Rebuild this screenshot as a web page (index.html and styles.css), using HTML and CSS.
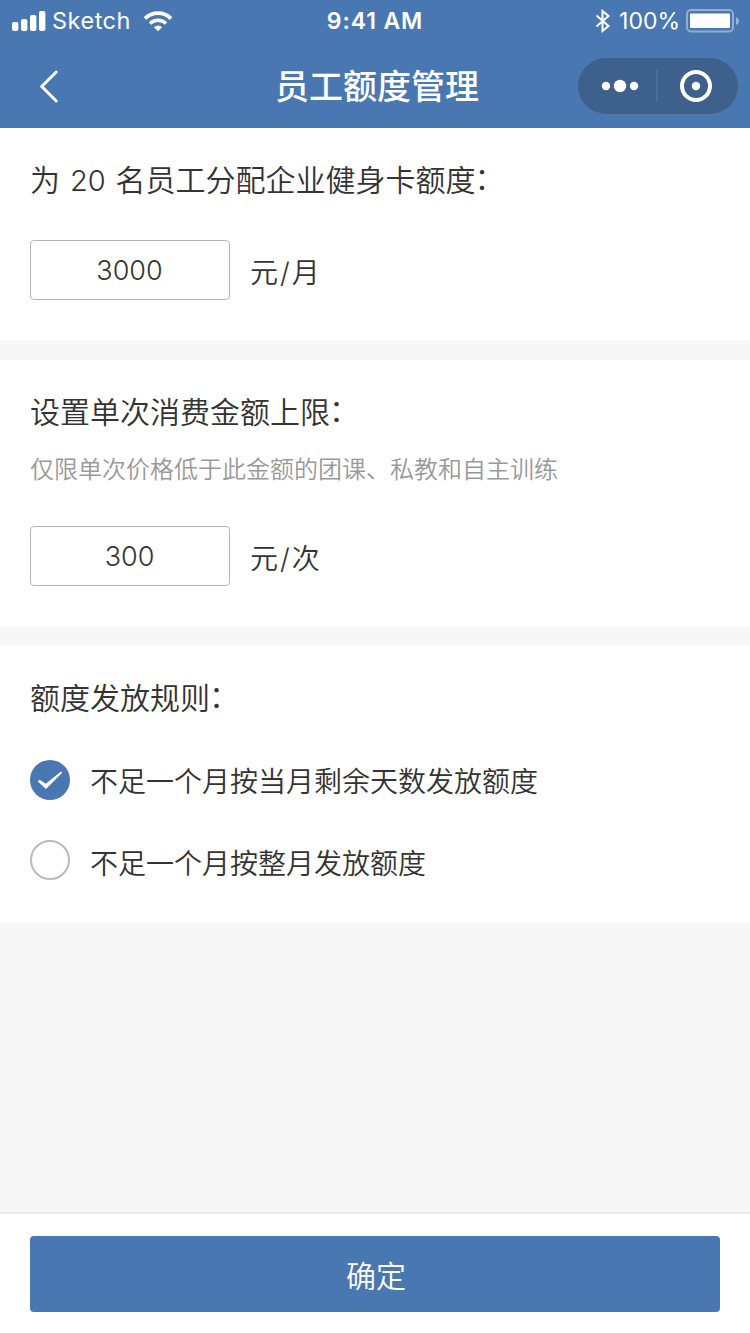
FILE: index.html
```
<!DOCTYPE html>
<html lang="zh-CN">
<head>
    <meta charset="UTF-8">
    <meta name="viewport" content="width=device-width, initial-scale=1.0">
    <title>员工额度管理</title>
    <link rel="stylesheet" href="styles.css">
</head>
<body>

    <header class="header">
        <div class="status-bar">
            <div class="status-left">
                <svg class="signal" width="34" height="20" viewBox="0 0 34 20" fill="#fff">
                    <rect x="0" y="11" width="6.4" height="9" rx="2"/>
                    <rect x="9" y="8" width="6.4" height="12" rx="2"/>
                    <rect x="18" y="4" width="6.4" height="16" rx="2"/>
                    <rect x="27" y="0" width="6.4" height="20" rx="2"/>
                </svg>
                <span class="carrier">Sketch</span>
                <svg class="wifi" width="30" height="21" viewBox="0 0 30 21" fill="none" stroke="#fff">
                    <path d="M2 7.6a18.4 18.4 0 0 1 26 0" stroke-width="3.8"/>
                    <path d="M7 12.6a11.4 11.4 0 0 1 16 0" stroke-width="3.4"/>
                    <path d="M15 20.3l-4-4.1a5.7 5.7 0 0 1 8 0z" fill="#fff" stroke="none"/>
                </svg>
            </div>
            <span class="time">9:41 AM</span>
            <div class="status-right">
                <svg width="16" height="24" viewBox="0 0 16 24" fill="none" stroke="#fff" stroke-width="2">
                    <path d="M1.500 6.500l12 10.500L7.500 22V2l6 5-12 10.500"/>
                </svg>
                <span class="percent">100%</span>
                <svg width="54" height="24" viewBox="0 0 54 24">
                    <rect x="1" y="1" width="46" height="21.5" rx="4" fill="none" stroke="#fff" stroke-opacity=".4" stroke-width="2"/>
                    <rect x="4" y="4.5" width="40" height="14.5" rx="1" fill="#fff"/>
                    <path d="M50 8c4 1.500 4 6.500 0 8z" fill="#fff" fill-opacity=".45"/>
                </svg>
            </div>
        </div>
        <nav class="nav-bar">
            <svg class="back" width="20" height="34" viewBox="0 0 20 34" fill="none" stroke="#fff" stroke-width="3" stroke-linecap="round" stroke-linejoin="round">
                <path d="M17.200 3L2.700 17.500 17.200 32"/>
            </svg>
            <h1 class="title">员工额度管理</h1>
            <div class="capsule">
                <svg width="38" height="14" viewBox="0 0 38 14" fill="#fff">
                    <circle cx="5" cy="7" r="4.200"/>
                    <circle cx="19" cy="7" r="6.200"/>
                    <circle cx="33" cy="7" r="4.200"/>
                </svg>
                <span class="capsule-line"></span>
                <svg width="34" height="34" viewBox="0 0 34 34">
                    <circle cx="17" cy="17" r="14" fill="none" stroke="#fff" stroke-width="4"/>
                    <circle cx="17" cy="17" r="4.200" fill="#fff"/>
                </svg>
            </div>
        </nav>
    </header>

    <form class="content">
        <section class="section">
            <h2>为 <span class="count">20</span> 名员工分配企业健身卡额度<span class="colon">：</span></h2>
            <div class="amount">
                <input type="text" name="quota" value="3000">
                <span>元<i>/</i>月</span>
            </div>
        </section>

        <section class="section">
            <h2>设置单次消费金额上限<span class="colon">：</span></h2>
            <p class="hint">仅限单次价格低于此金额的团课、私教和自主训练</p>
            <div class="amount">
                <input type="text" name="limit" value="300">
                <span>元<i>/</i>次</span>
            </div>
        </section>

        <section class="section rules">
            <h2>额度发放规则<span class="colon">：</span></h2>
            <div class="rule">
                <svg width="40" height="40" viewBox="0 0 40 40">
                    <circle cx="20" cy="20" r="20" fill="#4977b1"/>
                    <path d="M7.700 21.500l1.800-1.800 6.300 4L31 11.500l1.200 1.200L16 29z" fill="#fff"/>
                </svg>
                <span>不足一个月按当月剩余天数发放额度</span>
            </div>
            <div class="rule">
                <svg width="40" height="40" viewBox="0 0 40 40">
                    <circle cx="20" cy="20" r="19" fill="#fff" stroke="#bbb" stroke-width="2"/>
                </svg>
                <span>不足一个月按整月发放额度</span>
            </div>
        </section>
    </form>

    <footer class="footer">
        <button type="submit">确定</button>
    </footer>

</body>
</html>
```
FILE: styles.css
```
* {
    box-sizing: border-box;
}
body {
    margin: 0;
    height: 1333px;
    display: flex;
    flex-direction: column;
    background: #f7f7f7;
    color: #333;
    font-family: Inter, "Noto Sans CJK SC", sans-serif;
    font-weight: 350;
}
svg {
    display: block;
    flex: none;
}
h1, h2, p {
    margin: 0;
    font-weight: 350;
}

/* header */
.header {
    height: 128px;
    background: #4977b1;
    color: #fff;
}
.status-bar {
    height: 40px;
    padding: 0 10px 0 12px;
    display: grid;
    grid-template-columns: 1fr auto 1fr;
    align-items: center;
    font-size: 24px;
    font-weight: 400;
    line-height: 42px;
}
.status-left, .status-right {
    height: 40px;
    display: flex;
    align-items: center;
}
.carrier {
    margin: 0 12px 0 6px;
    font-size: 23.5px;
    letter-spacing: 0.5px;
}
.time {
    margin-right: 2px;
    font-size: 23px;
    font-weight: 600;
    letter-spacing: 0.9px;
}
.status-right {
    justify-content: flex-end;
}
.percent {
    margin: 0 6px 0 8px;
    font-size: 23px;
}
.nav-bar {
    height: 88px;
    padding: 4px 12px 0 16px;
    display: grid;
    grid-template-columns: 1fr auto 1fr;
    align-items: center;
}
.back {
    margin-left: 23px;
}
.title {
    padding-top: 2px;
    font-size: 34px;
    line-height: 48px;
    font-weight: 500;
}
.capsule {
    justify-self: end;
    width: 160px;
    height: 56px;
    padding: 0 25px 0 23px;
    display: flex;
    align-items: center;
    justify-content: space-between;
    border-radius: 28px;
    background: #3e608c;
    box-shadow: 0 0 0 1px #5179a8;
}
.capsule-line {
    width: 2px;
    height: 32px;
    margin-right: 4px;
    background: #4c6d98;
}

/* sections */
.content {
    flex: 1;
}
.section {
    padding: 31px 30px 40px;
    margin-bottom: 20px;
    background: #fff;
}
.section h2 {
    font-size: 30px;
    line-height: 42px;
}
.count {
    margin: 0 1.5px;
    font-size: 29px;
    line-height: 1;
}
.colon {
    margin-left: -1px;
    line-height: 1;
    vertical-align: 2px;
}
.hint {
    margin-top: 20px;
    color: #999;
    font-size: 24px;
    line-height: 34px;
}
.amount {
    margin-top: 39px;
    display: flex;
    align-items: center;
    gap: 20px;
    font-size: 28px;
}
.amount span {
    padding-top: 2px;
}
.amount input {
    width: 200px;
    height: 60px;
    padding: 0 1px 0 0;
    border: 1px solid #b5b5b5;
    border-radius: 4px;
    background: #fff;
    color: #333;
    font: inherit;
    font-size: 27px;
    text-align: center;
}
.amount i {
    font-style: normal;
    margin: 0 2px;
}
.rules {
    padding-bottom: 42px;
    margin-bottom: 0;
}
.rule {
    height: 40px;
    margin-top: 40px;
    display: flex;
    align-items: center;
    gap: 20px;
    font-size: 28px;
}
.rules h2 {
    margin-bottom: 41px;
}
.rule:last-child span {
    padding-top: 3px;
}

/* footer */
.footer {
    height: 121px;
    padding: 22px 30px 0;
    border-top: 2px solid #ebebeb;
    background: #fff;
}
.footer button {
    width: 100%;
    height: 76px;
    padding: 0 0 0 2px;
    border: none;
    border-radius: 4px;
    background: #4977b1;
    color: #fff;
    font: inherit;
    font-size: 30px;
}
```
